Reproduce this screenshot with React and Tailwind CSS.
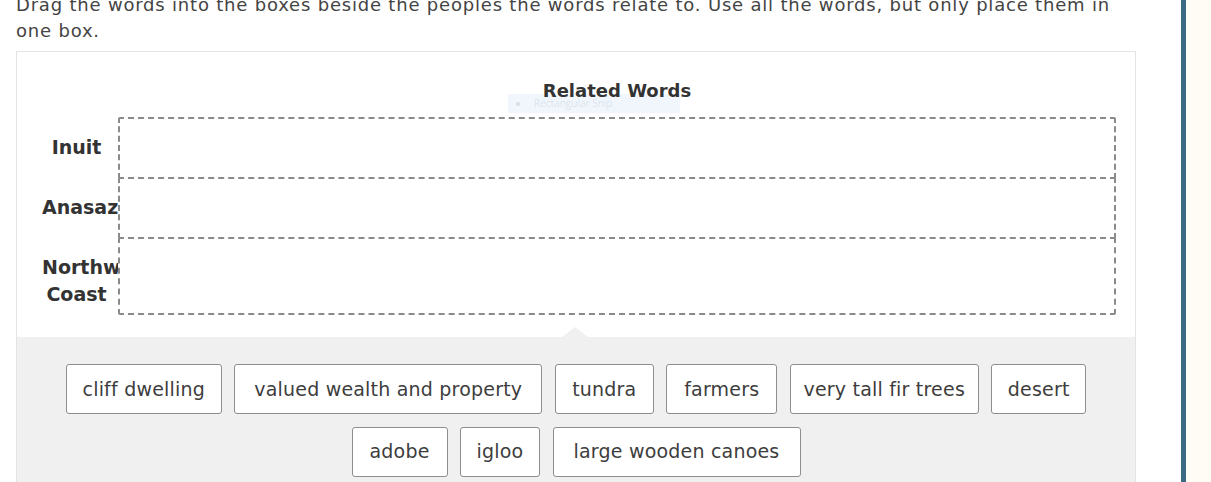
import React from "react";

const rows = [
  { label: "Inuit", h: "h-[62px]" },
  { label: "Anasazi", h: "h-[62px]" },
  { label: "Northwest Coast", h: "h-[78px]" },
];

const words1 = [
  { t: "cliff dwelling", w: "w-[156px]" },
  { t: "valued wealth and property", w: "w-[308px]" },
  { t: "tundra", w: "w-[99px]" },
  { t: "farmers", w: "w-[111px]" },
  { t: "very tall fir trees", w: "w-[189px]" },
  { t: "desert", w: "w-[95px]" },
];
const words2 = [
  { t: "adobe", w: "w-[96px]" },
  { t: "igloo", w: "w-[80px]" },
  { t: "large wooden canoes", w: "w-[248px]" },
];

function Word({ t, w }) {
  return (
    <div
      className={`${w} h-[50px] flex items-center justify-center bg-white border border-[#8e8e8e] rounded-[3px] text-[19px] tracking-[0.2px] text-[#3d3d3d] whitespace-nowrap`}
    >
      {t}
    </div>
  );
}

export default function App() {
  return (
    <div className="flex h-[482px] overflow-hidden bg-white font-[family-name:'DejaVu_Sans',sans-serif]">
      <div className="flex-1 pl-4 pr-[45px]">
        <p className="mt-[-8px] text-[18px] leading-[26px] tracking-[0.8px] text-[#444] whitespace-nowrap">
          Drag the words into the boxes beside the peoples the words relate to. Use all the words, but only place them in
          <br />
          one box.
        </p>
        <div className="mt-[7px] border border-[#e4e4e4]">
          <div className="relative bg-white pt-[25px] pb-[22px]">
            <div className="absolute left-[491px] top-[42px] w-[172px] h-[19px] bg-[#eef5fd] opacity-80 flex items-center gap-[14px] pl-[8px]">
              <div className="w-[4px] h-[4px] rounded-full bg-[#c9d6e6]" />
              <span className="text-[10px] text-[#d3dde9] font-[family-name:'Open_Sans',sans-serif]">
                Rectangular Snip
              </span>
            </div>
            <div className="relative flex pl-[25px] pr-[19px]">
              <div className="w-[76px]" />
              <div className="flex-1 text-center text-[18px] leading-[28px] font-bold text-[#333]">
                Related Words
              </div>
            </div>
            <div className="mt-[12px] flex flex-col pl-[25px] pr-[19px]">
              {rows.map((r, i) => (
                <div key={r.label} className={`flex ${i > 0 ? "-mt-[2px]" : ""}`}>
                  <div className="w-[76px] overflow-hidden shrink-0">
                    <div className="w-[69px] pt-[17px] text-center text-[19px] leading-[27px] font-bold text-[#333]">
                      {r.label}
                    </div>
                  </div>
                  <div
                    className={`flex-1 ${r.h} border-2 border-dashed border-[#8a8a8a] rounded-[2px] bg-white`}
                  />
                </div>
              ))}
            </div>
          </div>
          <div className="relative bg-[#f0f0f0] pt-[27px] pb-[40px]">
            <div className="absolute left-[545px] -top-[10px] w-0 h-0 border-l-[13px] border-r-[13px] border-b-[10px] border-l-transparent border-r-transparent border-b-[#f0f0f0]" />
            <div className="flex flex-col items-center gap-[12.5px]">
              <div className="flex gap-[12.5px]">
                {words1.map((w) => (
                  <Word key={w.t} {...w} />
                ))}
              </div>
              <div className="flex gap-[12.5px]">
                {words2.map((w) => (
                  <Word key={w.t} {...w} />
                ))}
              </div>
            </div>
          </div>
        </div>
      </div>
      <div className="w-[5px] bg-[#3b6a82]" />
      <div className="w-[25px] bg-[#fffcf6]" />
    </div>
  );
}
